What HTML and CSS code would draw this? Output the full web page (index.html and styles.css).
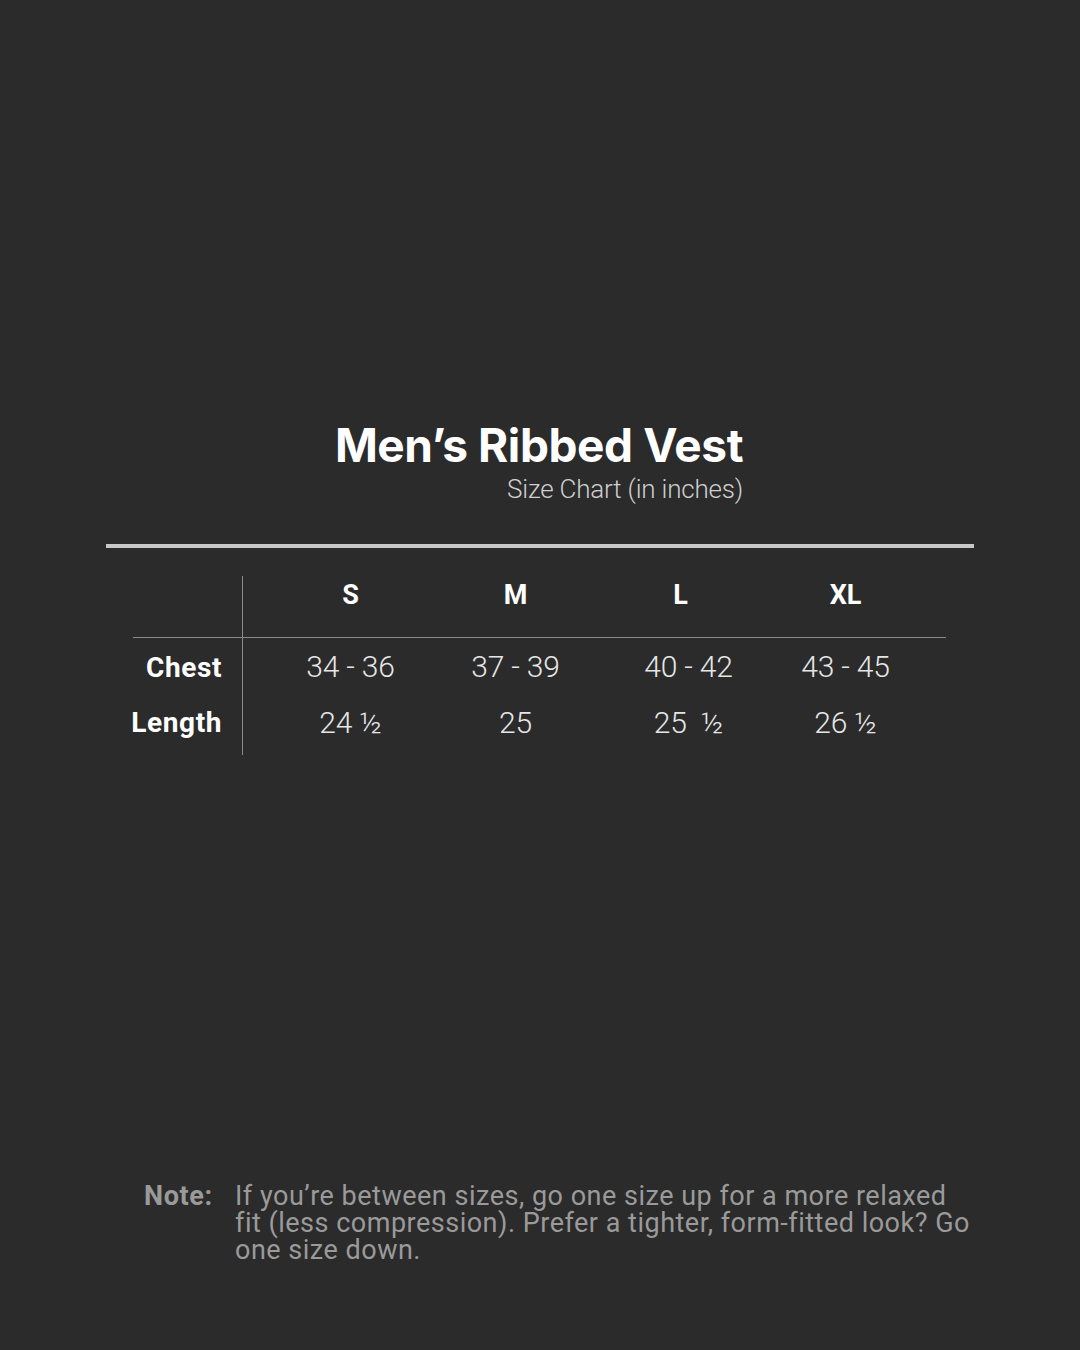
FILE: index.html
```html
<!DOCTYPE html>
<html>
<head>
<meta charset="utf-8">
<link rel="stylesheet" href="styles.css">
</head>
<body>
<main class="page">
  <header class="head">
    <h1 class="title">Men’s Ribbed Vest</h1>
    <p class="subtitle">Size Chart (in inches)</p>
  </header>
  <div class="rule"></div>
  <section class="chart">
    <div class="row row-head">
      <div class="label"></div>
      <div class="cells">
        <div class="cell">S</div>
        <div class="cell">M</div>
        <div class="cell">L</div>
        <div class="cell">XL</div>
      </div>
    </div>
    <div class="row row-body first">
      <div class="label">Chest</div>
      <div class="cells">
        <div class="cell">34 - 36</div>
        <div class="cell">37 - 39</div>
        <div class="cell shift">40 - 42</div>
        <div class="cell">43 - 45</div>
      </div>
    </div>
    <div class="row row-body last">
      <div class="label">Length</div>
      <div class="cells">
        <div class="cell">24 ½</div>
        <div class="cell">25</div>
        <div class="cell shift">25&nbsp; ½</div>
        <div class="cell">26 ½</div>
      </div>
    </div>
  </section>
  <footer class="note">
    <span class="note-label">Note:</span>
    <p class="note-text">If you’re between sizes, go one size up for a more relaxed fit (less compression). Prefer a tighter, form-fitted look? Go one size down.</p>
  </footer>
</main>
</body>
</html>
```
FILE: styles.css
```css
html, body {
  margin: 0;
  padding: 0;
  background: #2b2b2b;
}
.page {
  width: 1080px;
  height: 1350px;
  box-sizing: border-box;
  padding-top: 418px;
  display: flex;
  flex-direction: column;
  font-family: "Roboto", "Liberation Sans", sans-serif;
}
.head {
  align-self: center;
  display: flex;
  flex-direction: column;
  align-items: flex-end;
  margin-left: -2px;
}
.title {
  margin: 0;
  font-family: "Inter", "Roboto", sans-serif;
  font-weight: 700;
  font-size: 46px;
  line-height: 54px;
  letter-spacing: -0.4px;
  color: #ffffff;
}
.subtitle {
  margin: 0;
  font-size: 26px;
  line-height: 34px;
  font-weight: 300;
  letter-spacing: -0.2px;
  color: #cfcfcf;
}
.rule {
  margin: 38px 0 0 106px;
  width: 868px;
  height: 4px;
  background: #c8c8c8;
}
.chart {
  margin: 28px 0 0 133px;
  width: 813px;
}
.row {
  display: grid;
  grid-template-columns: 110px 1fr;
}
.label {
  border-right: 1px solid #8a8a8a;
  text-align: right;
  padding-right: 20px;
  font-weight: 700;
  font-size: 28px;
  letter-spacing: 0.6px;
  color: #ffffff;
}
.cells {
  display: grid;
  grid-template-columns: repeat(4, 165px);
  padding-left: 25px;
  align-items: center;
}
.cell {
  text-align: center;
}
.row-head {
  height: 62px;
  border-bottom: 1px solid #8a8a8a;
  box-sizing: border-box;
}
.row-head .cells {
  align-items: start;
  padding-top: 2px;
}
.row-head .cell {
  font-weight: 700;
  font-size: 27px;
  line-height: 34px;
  color: #ffffff;
}
.row-body {
  height: 56px;
}
.row-body .label {
  display: flex;
  align-items: center;
  justify-content: flex-end;
}
.row-body.first .label { padding-top: 2px; }
.row-body.last { height: 61px; }
.row-body.last .label, .row-body.last .cells { padding-bottom: 4px; }
.row-body .cell {
  font-weight: 300;
  font-size: 30px;
  color: #e6e6e6;
  letter-spacing: -0.2px;
}
.cell.shift { padding-left: 16px; }
.note {
  margin: auto 0 0 144px;
  padding-bottom: 86px;
  display: flex;
  color: #9a9a9a;
  font-size: 27px;
  line-height: 27px;
}
.note-label {
  font-weight: 700;
  letter-spacing: 0.6px;
  width: 91px;
  flex: none;
}
.note-text {
  margin: 0;
  width: 744px;
  letter-spacing: 0.5px;
}
```
